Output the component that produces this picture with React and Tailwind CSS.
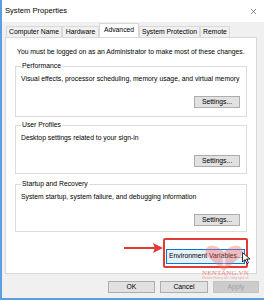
import { X } from "lucide-react";

const tabs = [
  { label: "Computer Name", w: "w-[56px]" },
  { label: "Hardware", w: "w-[37px]" },
  { label: "Advanced", w: "w-[40px]", active: true },
  { label: "System Protection", w: "w-[61px]" },
  { label: "Remote", w: "w-[30px]" },
];

function WinButton({ children, className = "", disabled = false }) {
  return (
    <button
      className={`h-[12px] border text-[6.8px] leading-none ${disabled ? "border-[#c4c4c4] bg-[#cccccc] text-[#a0a0a0]" : "border-[#adadad] bg-[#e1e1e1] text-black"} ${className}`}
    >
      {children}
    </button>
  );
}

function Group({ title, text, top, bottom, buttonClass = "border-[#adadad]" }) {
  return (
    <fieldset className={`mx-[9px] border border-[#dcdcdc] px-[5px] ${top} ${bottom}`}>
      <legend className="px-[1px] text-[6.8px] leading-[8px]">{title}</legend>
      <p className="mt-[5px] whitespace-nowrap text-[6.8px] leading-[8px]">{text}</p>
      <div className="mt-[13px] flex justify-end pr-[1px]">
        <WinButton className={`w-[46px] ${buttonClass}`}>Settings...</WinButton>
      </div>
    </fieldset>
  );
}

export default function App() {
  return (
    <div className="relative h-[300px] w-[264px] overflow-hidden border-b-2 border-l-2 border-[#5b9fe0] bg-[#f0f0f0] font-['Liberation_Sans',Arial,sans-serif] text-black">
      <div className="flex h-[22px] items-center justify-between bg-white pl-[3px] pr-[6px]">
        <span className="text-[7.6px]">System Properties</span>
        <X className="h-[9px] w-[9px] text-[#333]" strokeWidth={1.5} />
      </div>

      <div className="ml-[4px] mt-[2px] flex h-[13px] items-end">
        {tabs.map((t) => (
          <div
            key={t.label}
            className={`${t.w} flex items-center justify-center whitespace-nowrap border border-b-0 border-[#d9d9d9] text-[6.8px] leading-none ${t.active ? "relative z-10 h-[14px] bg-white" : "h-[11px] bg-[#f0f0f0]"}`}
          >
            {t.label}
          </div>
        ))}
      </div>

      <div className="relative ml-[3px] h-[237px] w-[252px] border border-[#d9d9d9] bg-white">
        <p className="mt-[10px] whitespace-nowrap pl-[11px] text-[6.8px] leading-[8px]">
          You must be logged on as an Administrator to make most of these changes.
        </p>
        <Group
          top="mt-[6px]"
          bottom="pb-[8px]"
          title="Performance"
          text="Visual effects, processor scheduling, memory usage, and virtual memory"
          buttonClass="border-[#7aaee3]"
        />
        <Group top="mt-[4px]" bottom="pb-[6px]" title="User Profiles" text="Desktop settings related to your sign-in" />
        <Group
          top="mt-[6px]"
          bottom="pb-[5px]"
          title="Startup and Recovery"
          text="System startup, system failure, and debugging information"
        />

        <div className="mr-[8px] mt-[6px] flex justify-end">
          <div className="rounded-[2px] border-2 border-[#e53935] p-[1px]">
            <button className="h-[15px] w-[79px] whitespace-nowrap border border-[#0078d7] bg-[#e5f1fb] pl-[2px] text-left text-[6.8px] leading-none">
              Environment Variables...
            </button>
          </div>
        </div>

        <div className="absolute left-[118px] top-[209px] h-[2px] w-[33px] bg-[#e53935]" />
        <svg className="absolute left-[147px] top-[205px]" width="10" height="10" viewBox="0 0 10 10">
          <polygon points="0,0 10,5 0,10 2,5" fill="#e53935" />
        </svg>

        <svg className="absolute left-[196px] top-[206px] opacity-40" width="44" height="28" viewBox="0 0 46 30">
          <path d="M23 29 L6 14 C1 9 3 2 10 2 C15 2 19 5 23 9 C27 5 31 2 36 2 C43 2 45 9 40 14 Z" fill="#f26b6b" />
          <path d="M23 13 L23 24" stroke="white" strokeWidth="3" opacity="0.7" />
        </svg>
        <svg className="absolute left-[236px] top-[214px]" width="9" height="12" viewBox="0 0 9 12">
          <path d="M0.5 0.5 L0.5 10 L3 7.5 L5 11.5 L6.5 10.8 L4.6 7 L8 7 Z" fill="white" stroke="black" strokeWidth="0.8" />
        </svg>
        <div className="absolute left-[196px] top-[232px] font-['Liberation_Serif',serif] text-[7px] leading-none tracking-[0.2px] text-[#f08080]">
          NENTANG.VN
        </div>
        <div className="absolute left-[196px] top-[239px] whitespace-nowrap text-[3px] leading-none text-[#f4a0a0]">
          Website Hướng dẫn Công nghệ số
        </div>
      </div>

      <div className="ml-[106px] mt-[7px] flex gap-[5px]">
        <WinButton className="w-[47px]">OK</WinButton>
        <WinButton className="w-[48px]">Cancel</WinButton>
        <WinButton className="w-[46px]" disabled>
          Apply
        </WinButton>
      </div>
    </div>
  );
}
